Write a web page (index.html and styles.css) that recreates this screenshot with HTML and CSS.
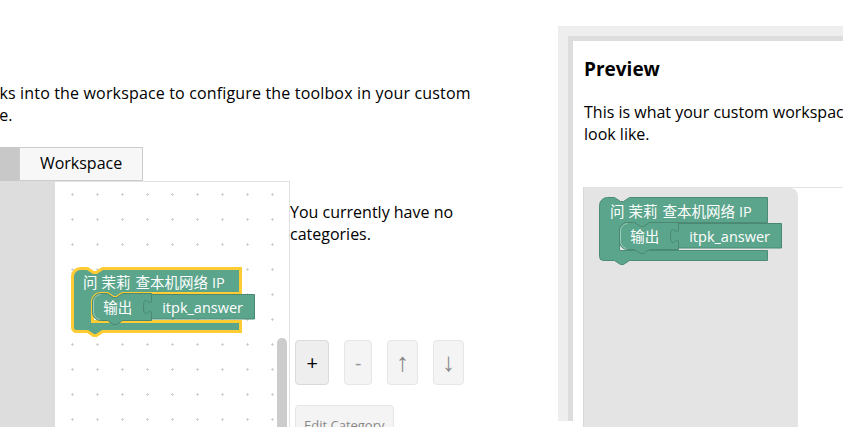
FILE: index.html
```html
<!DOCTYPE html>
<html lang="en">
<head>
<meta charset="utf-8">
<title>Workspace Factory</title>
<link rel="stylesheet" href="styles.css">
</head>
<body>
<div class="page">
  <section class="editor">
    <p class="intro">Drag blocks into the workspace to configure the toolbox in your custom<br>workspace.</p>
    <div class="tabs">
      <div class="tab tab-toolbox">Toolbox</div>
      <div class="tab tab-workspace">Workspace</div>
    </div>
    <div class="editor-body">
      <div class="toolbox"></div>
      <div class="workspace">
        <svg class="grid" width="234" height="300">
          <defs>
            <pattern id="dots" x="5" y="0" width="25" height="25" patternUnits="userSpaceOnUse">
              <path d="M11 12.5 H14 M12.5 11 V14" stroke="#d2d2d2" stroke-width="1"/>
            </pattern>
          </defs>
          <rect width="234" height="300" fill="url(#dots)"/>
        </svg>
        <svg class="blk blk-edit" width="200" height="76" viewBox="0 0 200 76">
          <g transform="translate(10.5,6.5)">
            <path class="b-parent sel" d="M0,8 A8,8 0 0 1 8,0 H15 l6,4 3,0 6,-4 H168 V25 H50 l-6,4 -3,0 -6,-4 H28 A8,8 0 0 0 20,33 V53 H168 V63 H30 l-6,4 -3,0 -6,-4 H4 A4,4 0 0 1 0,59 Z"/>
            <path class="b-inner" d="M28,25 H35 l6,4 3,0 6,-4 H79 V52 H50 l-6,4 -3,0 -6,-4 H28 A8,8 0 0 1 20,44 V33 A8,8 0 0 1 28,25 Z"/>
            <path class="b-hl" d="M27,51 A8,8 0 0 1 21,44 V33 A8,8 0 0 1 28,26"/>
            <path class="b-val" d="M79,26 H182 V50.5 H79 V46 c0,-10 -8,8 -8,-7.5 s8,2.5 8,-7.5 Z"/>
            <text class="b-txt" x="10.5" y="19">问</text>
            <text class="b-txt" x="29" y="19">茉莉</text>
            <text class="b-txt" x="63" y="19">查本机网络</text>
            <text class="b-txt" x="139.5" y="19">IP</text>
            <text class="b-txt" x="30.7" y="44">输出</text>
            <text class="b-txt" x="89.7" y="44">itpk_answer</text>
          </g>
        </svg>
        <div class="scrollbar"></div>
      </div>
      <div class="cats">
        <p class="cats-msg">You currently have no categories.</p>
        <div class="btns">
          <button class="btn btn-on">+</button>
          <button class="btn btn-off btn-minus">-</button>
          <button class="btn btn-off btn-arrow">↑</button>
          <button class="btn btn-off btn-arrow">↓</button>
        </div>
        <button class="btn-edit">Edit Category</button>
      </div>
    </div>
  </section>
  <section class="preview">
    <div class="preview-inner">
      <h3 class="preview-title">Preview</h3>
      <p class="preview-text">This is what your custom workspace will look like.</p>
      <div class="preview-ws">
        <div class="flyout">
          <svg class="blk blk-prev" width="200" height="76" viewBox="0 0 200 76">
            <g transform="translate(10.5,6.5)">
              <path class="b-parent" d="M0,8 A8,8 0 0 1 8,0 H15 l6,4 3,0 6,-4 H168 V25 H50 l-6,4 -3,0 -6,-4 H28 A8,8 0 0 0 20,33 V53 H168 V63 H30 l-6,4 -3,0 -6,-4 H4 A4,4 0 0 1 0,59 Z"/>
              <path class="b-inner" d="M28,25 H35 l6,4 3,0 6,-4 H79 V52 H50 l-6,4 -3,0 -6,-4 H28 A8,8 0 0 1 20,44 V33 A8,8 0 0 1 28,25 Z"/>
              <path class="b-hl" d="M27,51 A8,8 0 0 1 21,44 V33 A8,8 0 0 1 28,26"/>
              <path class="b-val" d="M79,26 H182 V50.5 H79 V46 c0,-10 -8,8 -8,-7.5 s8,2.5 8,-7.5 Z"/>
              <text class="b-txt" x="10.5" y="19">问</text>
              <text class="b-txt" x="29" y="19">茉莉</text>
              <text class="b-txt" x="63" y="19">查本机网络</text>
              <text class="b-txt" x="139.5" y="19">IP</text>
              <text class="b-txt" x="30.7" y="44">输出</text>
              <text class="b-txt" x="89.7" y="44">itpk_answer</text>
            </g>
          </svg>
        </div>
      </div>
    </div>
  </section>
</div>
</body>
</html>
```

FILE: styles.css
```css
html, body {
  margin: 0;
  padding: 0;
  background: #fff;
}
body {
  width: 843px;
  height: 427px;
  overflow: hidden;
  font-family: "Open Sans", "Noto Sans CJK SC", sans-serif;
  font-size: 16px;
  line-height: 22px;
  color: #000;
}
.page {
  display: flex;
  align-items: flex-start;
  width: 1300px;
}
.editor {
  flex: none;
  width: 629px;
  margin-left: -71px;
  padding-top: 82px;
}
.intro {
  margin: 0 0 0 -2px;
  white-space: nowrap;
  letter-spacing: 0.16px;
}
.tabs {
  display: flex;
  margin-top: 21px;
}
.tab {
  padding: 4px 20px 6px;
  border: 1px solid #ccc;
  background: #f7f7f7;
}
.tab-toolbox {
  background: #c8c8c8;
  border-color: #c8c8c8;
  padding-left: 9px;
  padding-right: 19px;
}
.editor-body {
  display: flex;
  align-items: flex-start;
}
.toolbox {
  flex: none;
  width: 126px;
  height: 260px;
  background: #ddd;
}
.workspace {
  flex: none;
  position: relative;
  width: 234px;
  height: 259px;
  border-top: 1px solid #e2e2e2;
  border-right: 1px solid #e2e2e2;
  background: #fff;
  overflow: hidden;
}
.grid {
  position: absolute;
  left: 0;
  top: 0;
}
.blk {
  position: absolute;
  overflow: visible;
}
.blk-edit {
  left: 7px;
  top: 80px;
}
.blk-prev {
  left: 5px;
  top: 3px;
}
.b-parent {
  fill: #5ba58c;
  stroke: #4c8c77;
  stroke-width: 1;
}
.b-parent.sel {
  stroke: #fc3;
  stroke-width: 3;
}
.b-inner {
  fill: #5ba58c;
  stroke: #4a8872;
  stroke-width: 1;
}
.b-hl {
  fill: none;
  stroke: #9ccbb9;
  stroke-width: 1;
}
.b-val {
  fill: #5ba58c;
  stroke: #4a8872;
  stroke-width: 1;
}
.b-txt {
  fill: #fff;
  font-family: "Open Sans", "Noto Sans CJK SC", sans-serif;
  font-size: 14.5px;
}
.scrollbar {
  position: absolute;
  left: 222px;
  top: 156px;
  width: 10px;
  height: 200px;
  border-radius: 5px;
  background: #ccc;
}
.cats {
  flex: none;
  width: 200px;
}
.cats-msg {
  margin: 20px 0 0;
}
.btns {
  display: flex;
  gap: 15px;
  margin: 95px 0 0 5px;
}
.btn {
  font-family: "Open Sans", sans-serif;
  font-size: 20px;
  line-height: 23px;
  padding: 10px 10.5px;
  border-radius: 4px;
  border: 1px solid #e6e6e6;
  background: #f4f4f4;
  color: #999;
}
.btn-on {
  background: #eee;
  border-color: #dadada;
  color: #000;
}
.btn-minus {
  padding: 10px 9.5px;
}
.btn-arrow {
  font-family: "Liberation Sans", sans-serif;
  font-size: 26px;
  padding: 10px 8px;
  color: #8a8a8a;
}
.btn-edit {
  display: block;
  margin: 20px 0 0 5px;
  padding: 10px 8px;
  font-family: "Open Sans", sans-serif;
  font-size: 13px;
  line-height: 18px;
  color: #888;
  background: #f4f4f4;
  border: 1px solid #e6e6e6;
  border-radius: 4px;
}
.preview {
  flex: none;
  margin-top: 26px;
  padding: 10px 0 0 10px;
  background: #eee;
}
.preview-inner {
  width: 330px;
  height: 380px;
  padding: 0 0 0 11px;
  border-top: 5px solid #ddd;
  border-left: 5px solid #ddd;
  background: #fff;
}
.preview-title {
  margin: 0;
  padding-top: 15px;
  font-size: 19px;
  line-height: 26px;
  font-weight: bold;
}
.preview-text {
  margin: 19px 0 0;
}
.preview-ws {
  display: flex;
  margin: 42px 0 0 -1px;
  height: 260px;
  border-top: 1px solid #e2e2e2;
  border-left: 1px solid #d8d8d8;
}
.flyout {
  position: relative;
  width: 214px;
  height: 260px;
  background: #e4e4e4;
  border-top-right-radius: 8px;
}
```
